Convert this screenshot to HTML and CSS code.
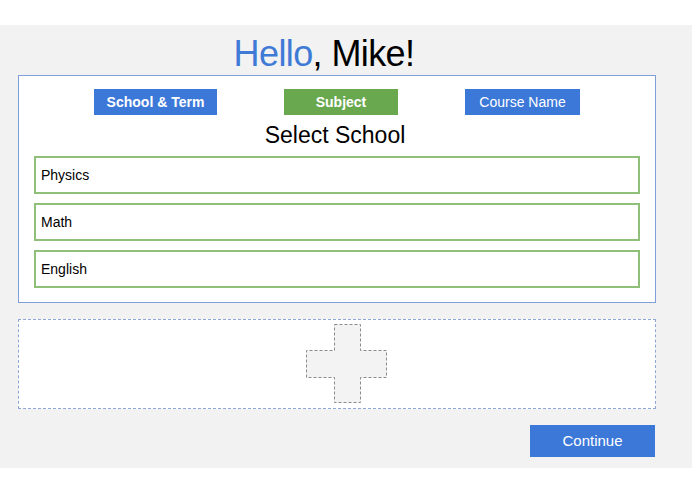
FILE: index.html
```html
<!DOCTYPE html>
<html>
<head>
<meta charset="utf-8">
<link rel="stylesheet" href="styles.css">
</head>
<body>
<div class="panel">
  <h1 class="title"><span class="hello">Hello</span>, Mike!</h1>
  <div class="card">
    <div class="tabs">
      <div class="tab tab-school">School &amp; Term</div>
      <div class="tab tab-subject">Subject</div>
      <div class="tab tab-course">Course Name</div>
    </div>
    <div class="heading">Select School</div>
    <div class="list">
      <div class="item">Physics</div>
      <div class="item">Math</div>
      <div class="item">English</div>
    </div>
  </div>
  <div class="dropzone">
    <svg class="plus" width="82" height="80" viewBox="0 0 82 80">
      <polygon points="28.5,0.5 54.5,0.5 54.5,26.5 80.5,26.5 80.5,53.5 54.5,53.5 54.5,78.5 28.5,78.5 28.5,53.5 0.5,53.5 0.5,26.5 28.5,26.5" fill="#f3f3f3" stroke="#8a8a8a" stroke-width="1" stroke-dasharray="3,2"/>
    </svg>
  </div>
  <div class="actions">
    <div class="continue">Continue</div>
  </div>
</div>
</body>
</html>
```

FILE: styles.css
```css
html, body {
  margin: 0;
  padding: 0;
  background: #ffffff;
  font-family: "Liberation Sans", Arial, sans-serif;
}

.panel {
  margin-top: 25px;
  width: 692px;
  height: 443px;
  box-sizing: border-box;
  background: #f2f2f2;
  padding: 0 36px 0 18px;
}

.title {
  margin: 0;
  padding-top: 7px;
  padding-right: 26px;
  height: 50px;
  box-sizing: border-box;
  font-size: 36px;
  line-height: 43px;
  font-weight: normal;
  letter-spacing: -0.6px;
  text-align: center;
  color: #000;
}

.hello {
  color: #3f7ad6;
}

.card {
  background: #fff;
  border: 1px solid #7f9fd8;
  height: 228px;
  box-sizing: border-box;
  padding: 13px 15px 0 15px;
}

.tabs {
  display: flex;
  justify-content: space-between;
  padding: 0 60px;
}

.tab {
  height: 26px;
  line-height: 26px;
  font-size: 14px;
  color: #fff;
  text-align: center;
}

.tab-school {
  width: 123px;
  background: #3c78d8;
  font-weight: bold;
}

.tab-subject {
  width: 114px;
  background: #6aa84f;
  font-weight: bold;
}

.tab-course {
  width: 115px;
  background: #3c78d8;
}

.heading {
  height: 41px;
  line-height: 41px;
  font-size: 23px;
  text-align: center;
  padding-right: 4px;
  color: #000;
}

.list {
  display: flex;
  flex-direction: column;
  gap: 9px;
}

.item {
  height: 38px;
  box-sizing: border-box;
  border: 2px solid #8fbf79;
  padding-left: 5px;
  line-height: 34px;
  font-size: 14px;
  color: #000;
}

.dropzone {
  margin-top: 16px;
  height: 90px;
  box-sizing: border-box;
  border: 1px dashed #8ea6d6;
  background: #fff;
  display: flex;
  align-items: center;
  justify-content: center;
}

.plus {
  display: block;
  margin-left: 19px;
}

.actions {
  display: flex;
  justify-content: flex-end;
  margin-top: 16px;
  padding-right: 1px;
}

.continue {
  width: 125px;
  height: 32px;
  line-height: 32px;
  background: #3c78d8;
  color: #fff;
  font-size: 15px;
  text-align: center;
}
```
